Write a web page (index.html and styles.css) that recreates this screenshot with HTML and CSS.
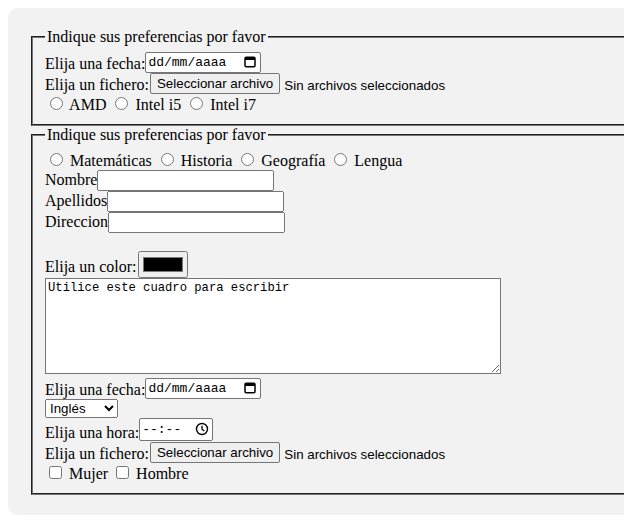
FILE: index.html
```html
<!DOCTYPE html>
<html lang="es">
<head>
<meta charset="utf-8">
<title>Preferencias</title>
<link rel="stylesheet" href="styles.css">
</head>
<body>
<div class="panel">
  <fieldset class="group">
    <legend>Indique sus preferencias por favor</legend>
    <span>Elija una fecha:</span><span class="fake-input date"><span class="mono">dd/mm/aaaa</span><svg class="ico" width="14" height="14" viewBox="0 0 14 14"><rect x="2" y="2.25" width="10" height="9.5" rx="1.2" fill="none" stroke="#000" stroke-width="1.5"/><rect x="2" y="2" width="10" height="3" fill="#000"/></svg></span><br>
    <span>Elija un fichero:</span><span class="file"><span class="file-btn">Seleccionar archivo</span><span class="file-txt">Sin archivos seleccionados</span></span><br>
    <input type="radio" name="cpu"> AMD <input type="radio" name="cpu"> Intel i5 <input type="radio" name="cpu"> Intel i7
  </fieldset>
  <fieldset class="group second">
    <legend>Indique sus preferencias por favor</legend>
    <input type="radio" name="mat"> Matemáticas <input type="radio" name="mat"> Historia <input type="radio" name="mat"> Geografía <input type="radio" name="mat"> Lengua<br>
    Nombre<input type="text" class="text"><br>
    Apellidos<input type="text" class="text"><br>
    Direccion<input type="text" class="text"><br>
    <br>
    Elija un color:<input type="color" class="color" value="#000000"><br>
    <textarea class="area">Utilice este cuadro para escribir</textarea><br>
    <span>Elija una fecha:</span><span class="fake-input date"><span class="mono">dd/mm/aaaa</span><svg class="ico" width="14" height="14" viewBox="0 0 14 14"><rect x="2" y="2.25" width="10" height="9.5" rx="1.2" fill="none" stroke="#000" stroke-width="1.5"/><rect x="2" y="2" width="10" height="3" fill="#000"/></svg></span><br>
    <select class="sel"><option>Inglés</option><option>Español</option></select><br>
    <span>Elija una hora:</span><span class="fake-input time"><span class="mono">--:--</span><svg class="ico" width="14" height="14" viewBox="0 0 14 14"><circle cx="7" cy="7" r="5.5" fill="none" stroke="#000" stroke-width="1.4"/><path d="M7 3.8V7.2L9.3 9" fill="none" stroke="#000" stroke-width="1.3"/></svg></span><br>
    <span>Elija un fichero:</span><span class="file"><span class="file-btn">Seleccionar archivo</span><span class="file-txt">Sin archivos seleccionados</span></span><br>
    <input type="checkbox"> Mujer <input type="checkbox"> Hombre
  </fieldset>
</div>
</body>
</html>
```
FILE: styles.css
```css
body {
  margin: 8px 0 8px 8px;
  font-family: "Liberation Serif", "Times New Roman", serif;
  font-size: 16px;
  color: #000;
  background: #fff;
}
.panel {
  overflow: hidden;
  background: #f2f2f2;
  border-radius: 10px 0 0 10px;
  padding: 20px 0 20px 21px;
}
.group {
  margin: 0 -40px 0 2px;
  border: 2px groove #767676;
}
.second { padding-top: 6px; }
.fake-input {
  display: inline-flex;
  align-items: center;
  justify-content: space-between;
  box-sizing: border-box;
  height: 21px;
  background: #fff;
  border: 1px solid #767676;
  border-radius: 2px;
  padding: 0 3px 0 2px;
  vertical-align: bottom;
}
.date { width: 116px; }
.time { width: 74px; height: 23px; margin-bottom: 1px; }
.mono {
  font-family: "Liberation Mono", "DejaVu Sans Mono", monospace;
  font-size: 13px;
}
.ico { display: block; }
.file {
  font-family: "Liberation Sans", Arial, sans-serif;
  font-size: 13.33px;
}
.file-btn {
  display: inline-block;
  box-sizing: border-box;
  height: 21px;
  line-height: 19px;
  padding: 0 6px;
  margin: 0 4px 0 1px;
  background: #efefef;
  border: 1px solid #767676;
  border-radius: 2px;
  vertical-align: bottom;
}
.text {
  box-sizing: border-box;
  width: 177px;
  height: 21px;
  margin: 0;
  font-family: "Liberation Sans", Arial, sans-serif;
  font-size: 13.33px;
}
.color { margin: 0 0 0 1px; }
.area {
  box-sizing: border-box;
  width: 456px;
  height: 96px;
  margin: 0;
  padding: 2px;
  font-family: "Liberation Mono", "DejaVu Sans Mono", monospace;
  font-size: 12.2px;
  border: 1px solid #767676;
  resize: both;
}
.sel {
  width: 73px;
  height: 19px;
  font-family: "Liberation Sans", Arial, sans-serif;
  font-size: 13.33px;
  margin: 0;
}
```
